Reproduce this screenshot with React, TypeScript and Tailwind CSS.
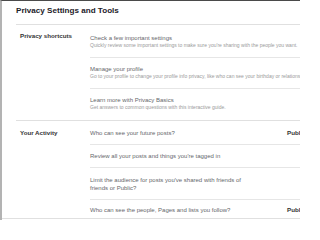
import React from "react";

function Row({
  title,
  sub,
  right,
  last,
  cls,
}: {
  title: React.ReactNode;
  sub?: string;
  right?: string;
  last?: boolean;
  cls: string;
}) {
  return (
    <div className={`flex ${cls} ${last ? "" : "border-b border-[#e6e6e6]"}`}>
      <div className="flex-1 min-w-0">
        <div className="text-[6px] leading-[8px] text-[#65676b] whitespace-nowrap">{title}</div>
        {sub && (
          <div className="text-[5px] leading-[7px] text-[#9a9a9a] whitespace-nowrap">{sub}</div>
        )}
      </div>
      <div className="w-[43px] shrink-0 text-[6.2px] leading-[8px] font-bold text-[#333]">
        {right}
      </div>
    </div>
  );
}

export default function App() {
  return (
    <div className="w-[300px] h-[220px] overflow-hidden bg-white border-t border-t-[#4a4a4a] border-l-2 border-l-[#b3b3b3] font-['Liberation_Sans',Arial,sans-serif]">
      <div className="w-[340px]">
        <div className="ml-[14px] pt-[5px] pb-[8px] border-b border-[#e0e0e0]">
          <div className="text-[8.1px] leading-[10px] font-bold text-[#1d2129]">
            Privacy Settings and Tools
          </div>
        </div>

        <div className="ml-[14px] pl-[4px] pt-[2px] pb-[1px] border-b border-[#e0e0e0] flex">
          <div className="w-[70px] shrink-0 pt-[5px] text-[6.2px] leading-[8px] font-bold text-[#333]">
            Privacy shortcuts
          </div>
          <div className="w-[240px]">
            <Row
              cls="pt-[7px] pb-[8px]"
              title="Check a few important settings"
              sub="Quickly review some important settings to make sure you're sharing with the people you want."
            />
            <Row
              cls="pt-[7px] pb-[8px]"
              title="Manage your profile"
              sub="Go to your profile to change your profile info privacy, like who can see your birthday or relationships."
            />
            <Row
              cls="pt-[7px] pb-[8px]"
              last
              title="Learn more with Privacy Basics"
              sub="Get answers to common questions with this interactive guide."
            />
          </div>
        </div>

        <div className="ml-[14px] pl-[4px] pt-[1px] flex">
          <div className="w-[70px] shrink-0 pt-[7px] text-[6.2px] leading-[8px] font-bold text-[#333]">
            Your Activity
          </div>
          <div className="w-[240px]">
            <Row cls="pt-[7px] pb-[7px]" title="Who can see your future posts?" right="Public" />
            <Row cls="pt-[7px] pb-[7px]" title="Review all your posts and things you're tagged in" />
            <Row
              cls="pt-[8px] pb-[7px]"
              title={
                <>
                  Limit the audience for posts you've shared with friends of
                  <br />
                  friends or Public?
                </>
              }
            />
            <Row
              cls="pt-[6px] pb-[4px]"
              last
              title="Who can see the people, Pages and lists you follow?"
              right="Public"
            />
          </div>
        </div>
        <div className="h-px bg-[#e0e0e0]" />
      </div>
    </div>
  );
}
